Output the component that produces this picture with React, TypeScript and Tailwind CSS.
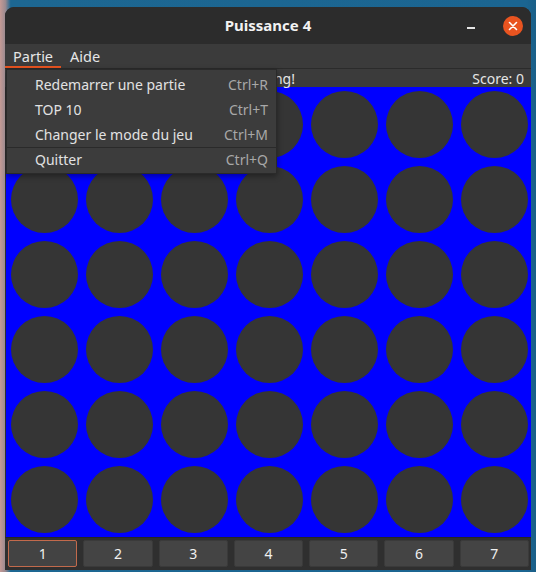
const COLS = 7;
const ROWS = 6;

const menuItems = [
  { label: "Redemarrer une partie", shortcut: "Ctrl+R" },
  { label: "TOP 10", shortcut: "Ctrl+T" },
  { label: "Changer le mode du jeu", shortcut: "Ctrl+M" },
];

const CloseIcon = () => (
  <svg width="10" height="10" viewBox="0 0 10 10" fill="none">
    <path d="M1.5 1.5L8.5 8.5M8.5 1.5L1.5 8.5" stroke="#ffffff" strokeWidth="1.6" strokeLinecap="round" />
  </svg>
);

const PartieMenu = () => (
  <div className="absolute left-[1px] top-[62px] w-[271px] border border-[#2a2a2a] bg-[#3c3c3c] pt-[2px] pb-[2px] shadow-[0_2px_6px_rgba(0,0,0,0.4)]">
    {menuItems.map((item) => (
      <div key={item.label} className="flex h-[25px] items-center justify-between pl-[28px] pr-[8px]">
        <span className="text-[#e2e2e2]">{item.label}</span>
        <span className="text-[#a8a8a8]">{item.shortcut}</span>
      </div>
    ))}
    <div className="h-px bg-[#2a2a2a]" />
    <div className="flex h-[23px] items-center justify-between pl-[28px] pr-[8px]">
      <span className="text-[#e2e2e2]">Quitter</span>
      <span className="text-[#a8a8a8]">Ctrl+Q</span>
    </div>
  </div>
);

export default function App() {
  return (
    <div
      className="h-[572px] w-[536px] overflow-hidden bg-[linear-gradient(90deg,#c59a95_0%,#9a8a90_1%,#1d6792_2%,#1b6591_98%,#1a5f88_100%)] pl-[5px] pr-[5px] pt-[7px] text-[14px] leading-none"
      style={{ fontFamily: '"Noto Sans", "Open Sans", sans-serif' }}
    >
      <div className="relative w-[526px] overflow-hidden rounded-t-[9px] bg-[#2f2f2f]">
        {/* title bar */}
        <div className="relative flex h-[37px] items-center justify-center bg-[#2c2c2c]">
          <span className="text-[15px] font-bold text-[#f2f2f2]">Puissance 4</span>
          <div className="absolute right-[8px] top-[9px] flex items-center gap-[28px]">
            <div className="mt-[4px] h-[1.5px] w-[8px] bg-[#e6e6e6]" />
            <div className="flex h-[20px] w-[20px] items-center justify-center rounded-full bg-[#e95420]">
              <CloseIcon />
            </div>
          </div>
        </div>

        {/* menubar */}
        <div className="flex h-[25px] items-stretch border-b border-[#2b2b2b] bg-[#3b3b3b] text-[14.5px] text-[#e6e6e6]">
          <div className="flex items-center border-b-[2px] border-[#e95420] px-[8px] pt-[2px]">Partie</div>
          <div className="flex items-center px-[9px]">Aide</div>
        </div>

        {/* status line */}
        <div className="flex h-[18px] items-center justify-between bg-[#3b3b3b] pt-[1px] pr-[7px] text-[#e6e6e6]">
          <span className="w-[290px] text-right">C'est parti, Playing!</span>
          <span>Score: 0</span>
        </div>

        {/* board */}
        <div className="ml-[1px] grid w-[525px] grid-cols-7 bg-[#0000ff]">
          {Array.from({ length: COLS * ROWS }).map((_, i) => (
            <div key={i} className="flex h-[75px] items-center justify-center pl-[2px]">
              <div className="h-[67px] w-[67px] rounded-full bg-[#353535]" />
            </div>
          ))}
        </div>

        {/* column buttons */}
        <div className="grid h-[33px] grid-cols-7 gap-[6px] border-t border-[#262626] bg-[#2f2f2f] pl-[3px] pr-[2px] pt-[2px] pb-[3px]">
          {Array.from({ length: COLS }).map((_, i) => (
            <div
              key={i}
              className={
                i === 0
                  ? "flex items-center justify-center rounded-[2px] border border-[#c26a4c] bg-[#434343] text-[#f0f0f0]"
                  : "flex items-center justify-center rounded-[2px] border border-[#3a3a3a] bg-[#444444] text-[#f0f0f0]"
              }
            >
              {i + 1}
            </div>
          ))}
        </div>

        <PartieMenu />
      </div>
    </div>
  );
}
